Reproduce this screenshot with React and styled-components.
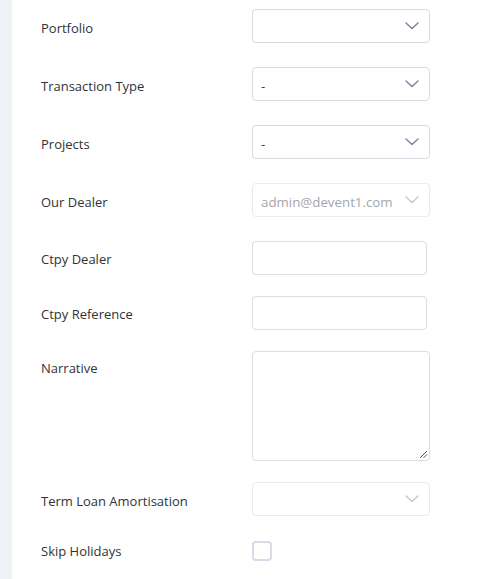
import React from "react";
import styled, { createGlobalStyle } from "styled-components";

const GlobalStyle = createGlobalStyle`
  html, body {
    margin: 0;
    padding: 0;
    background: #eef2f6;
  }
  * {
    box-sizing: border-box;
  }
`;

const Page = styled.div`
  min-height: 579px;
  padding-left: 12px;
  font-family: "Open Sans", "Noto Sans", sans-serif;
`;

const Panel = styled.div`
  background: #ffffff;
  min-height: 579px;
  padding: 9px 0 0 29px;
`;

const Form = styled.div`
  display: flex;
  flex-direction: column;
`;

const Row = styled.div`
  display: grid;
  grid-template-columns: 211px auto;
  align-items: ${(p) => (p.$top ? "start" : "center")};
  margin-bottom: ${(p) => p.$mb ?? 24}px;
`;

const Label = styled.label`
  font-size: 13px;
  color: #2f3337;
  padding-top: ${(p) => p.$pt ?? 4}px;
`;

const SelectBox = styled.div`
  width: 178px;
  height: 34px;
  border: 1px solid ${(p) => (p.$disabled ? "#e9eaf0" : "#d9dae3")};
  border-radius: 4px;
  display: flex;
  align-items: center;
  justify-content: space-between;
  padding: 0 10px 0 8px;
  font-size: 13.3px;
  color: ${(p) => (p.$disabled ? "#a3a6ae" : "#3a3f47")};
  background: #fff;
  span {
    padding-top: 3px;
  }
  svg {
    flex-shrink: 0;
    color: ${(p) => (p.$disabled ? "#c6cad3" : "#7b8aa3")};
  }
`;

const TextInput = styled.div`
  width: 175px;
  height: 34px;
  border: 1px solid #dcdde4;
  border-radius: 4px;
  background: #fff;
`;

const TextArea = styled.div`
  position: relative;
  width: 178px;
  height: 110px;
  border: 1px solid #dcdde4;
  border-radius: 4px;
  background: #fff;
`;

const Grip = styled.svg`
  position: absolute;
  right: 1px;
  bottom: 1px;
`;

const CheckBox = styled.div`
  width: 20px;
  height: 20px;
  border: 2px solid #d8dbe5;
  border-radius: 4px;
  background: #fff;
`;

const Chevron = () => (
  <svg width="14" height="8" viewBox="0 0 14 8" fill="none">
    <path
      d="M1 1l6 5.5L13 1"
      stroke="currentColor"
      strokeWidth="1.6"
      strokeLinecap="round"
      strokeLinejoin="round"
    />
  </svg>
);

const Select = ({ value, disabled }) => (
  <SelectBox $disabled={disabled}>
    <span>{value}</span>
    <Chevron />
  </SelectBox>
);

export default function App() {
  return (
    <Page>
      <GlobalStyle />
      <Panel>
        <Form>
          <Row>
            <Label>Portfolio</Label>
            <Select value="" />
          </Row>
          <Row>
            <Label>Transaction Type</Label>
            <Select value="-" />
          </Row>
          <Row>
            <Label>Projects</Label>
            <Select value="-" />
          </Row>
          <Row>
            <Label>Our Dealer</Label>
            <Select value="admin@devent1.com" disabled />
          </Row>
          <Row $mb={21}>
            <Label $pt={2}>Ctpy Dealer</Label>
            <TextInput />
          </Row>
          <Row $mb={21}>
            <Label $pt={2}>Ctpy Reference</Label>
            <TextInput />
          </Row>
          <Row $mb={21} $top>
            <Label $pt={8}>Narrative</Label>
            <TextArea>
              <Grip width="9" height="9" viewBox="0 0 9 9">
                <path d="M8 1L1 8M8 4.5L4.5 8" stroke="#555" strokeWidth="1" />
              </Grip>
            </TextArea>
          </Row>
          <Row $mb={25}>
            <Label>Term Loan Amortisation</Label>
            <Select value="" disabled />
          </Row>
          <Row $mb={0}>
            <Label $pt={0}>Skip Holidays</Label>
            <CheckBox />
          </Row>
        </Form>
      </Panel>
    </Page>
  );
}
